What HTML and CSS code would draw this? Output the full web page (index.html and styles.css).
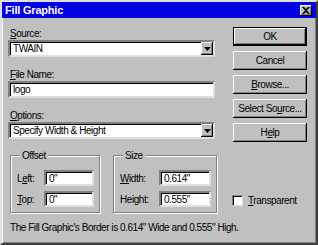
FILE: index.html
```html
<!DOCTYPE html>
<html lang="en">
<head>
  <meta charset="UTF-8" />
  <title>Fill Graphic</title>
  <link rel="stylesheet" href="styles.css">
</head>
<body>
  <div class="window">
    <div class="titlebar">
      <span class="title">Fill Graphic</span>
      <span class="close">
        <svg width="8" height="7" viewBox="0 0 8 7"><path d="M0 0h2l2 2 2-2h2L5 3.5 8 7H6L4 5 2 7H0l3-3.5z" fill="#000"/></svg>
      </span>
    </div>

    <div class="content">
      <div class="fields">
        <div class="label"><u>S</u>ource:</div>
        <div class="combo">
          <span class="value">TWAIN</span>
          <span class="drop"><svg width="7" height="4" viewBox="0 0 7 4"><path d="M0 0h7L3.5 4z" fill="#000"/></svg></span>
        </div>

        <div class="label"><u>F</u>ile Name:</div>
        <div class="textbox"><span class="value">logo</span></div>

        <div class="label"><u>O</u>ptions:</div>
        <div class="combo last">
          <span class="value">Specify Width &amp; Height</span>
          <span class="drop"><svg width="7" height="4" viewBox="0 0 7 4"><path d="M0 0h7L3.5 4z" fill="#000"/></svg></span>
        </div>
      </div>

      <div class="buttons">
        <button class="btn default">OK</button>
        <button class="btn">Cancel</button>
        <button class="btn"><u>B</u>rowse...</button>
        <button class="btn">Select So<u>u</u>rce...</button>
        <button class="btn">H<u>e</u>lp</button>
      </div>
    </div>

    <div class="groups">
      <fieldset class="group offset">
        <legend>Offset</legend>
        <div class="row">
          <span class="rlabel">L<u>e</u>ft:</span>
          <div class="textbox small"><span class="value">0"</span></div>
        </div>
        <div class="row">
          <span class="rlabel"><u>T</u>op:</span>
          <div class="textbox small"><span class="value">0"</span></div>
        </div>
      </fieldset>

      <fieldset class="group size">
        <legend>Size</legend>
        <div class="row">
          <span class="rlabel"><u>W</u>idth:</span>
          <div class="textbox small"><span class="value">0.614"</span></div>
        </div>
        <div class="row">
          <span class="rlabel">Hei<u>g</u>ht:</span>
          <div class="textbox small"><span class="value">0.555"</span></div>
        </div>
      </fieldset>

      <label class="check">
        <span class="box"></span>
        <span><u>T</u>ransparent</span>
      </label>
    </div>

    <div class="status">The Fill Graphic's Border is 0.614" Wide and 0.555" High.</div>
  </div>
</body>
</html>
```

FILE: styles.css
```css
* {
  box-sizing: border-box;
}

body {
  margin: 0;
  font-family: "Liberation Sans", Arial, sans-serif;
  font-size: 10px;
  letter-spacing: -0.45px;
  color: #000;
}

u {
  text-decoration-thickness: 1px;
  text-underline-offset: 1px;
}

.window {
  width: 318px;
  height: 245px;
  background: #c0c0c0;
  border: 2px solid;
  border-color: #dfdfdf #404040 #404040 #dfdfdf;
  box-shadow: inset 1px 1px 0 #fff, inset -1px -1px 0 #808080;
}

.titlebar {
  height: 16px;
  background: #0000e0;
  color: #fff;
  display: flex;
  align-items: center;
  justify-content: space-between;
  padding: 0 4px 0 3px;
}

.title {
  font-weight: bold;
  font-size: 11px;
  letter-spacing: -0.2px;
}

.close {
  width: 12px;
  height: 11px;
  background: #c0c0c0;
  display: flex;
  align-items: center;
  justify-content: center;
  box-shadow: inset -1px -1px 0 #000, inset 1px 1px 0 #fff, inset -2px -2px 0 #808080;
}

.content {
  display: flex;
  padding: 9px 0 0 6px;
}

.fields {
  width: 207px;
}

.label {
  height: 13px;
  line-height: 13px;
  padding-left: 2px;
}

.combo,
.textbox {
  height: 17px;
  background: #fff;
  border: 2px solid;
  border-color: #808080 #dfdfdf #dfdfdf #808080;
  box-shadow: inset 1px 1px 0 #000;
  display: flex;
  align-items: center;
  margin-bottom: 11px;
}

.combo.last {
  margin-bottom: 0;
}

.value {
  padding-left: 3px;
  line-height: 13px;
  white-space: nowrap;
}

.combo .value {
  flex: 1;
}

.drop {
  width: 12px;
  height: 13px;
  background: #c0c0c0;
  display: flex;
  align-items: center;
  justify-content: center;
  box-shadow: inset -1px -1px 0 #000, inset 1px 1px 0 #fff, inset -2px -2px 0 #808080;
}

.buttons {
  margin-left: 18px;
  display: flex;
  flex-direction: column;
  gap: 5px;
}

.btn {
  width: 74px;
  height: 19px;
  padding: 0;
  white-space: nowrap;
  background: #c0c0c0;
  border: none;
  font-family: inherit;
  font-size: 10px;
  letter-spacing: -0.45px;
  color: #000;
  box-shadow: inset -1px -1px 0 #000, inset 1px 1px 0 #fff, inset -2px -2px 0 #808080;
}

.btn.default {
  border: 1px solid #000;
}

.groups {
  display: flex;
  align-items: flex-end;
  margin: 7px 0 0 8px;
}

.group {
  margin: 0;
  padding: 8px 5px 5px 6px;
  border: 1px solid #808080;
  box-shadow: 1px 1px 0 #fff, inset 1px 1px 0 #fff;
  display: flex;
  flex-direction: column;
  gap: 5px;
}

.group legend {
  padding: 0 2px;
  margin-left: 3px;
  height: 13px;
  line-height: 13px;
  background: #c0c0c0;
}

.offset {
  width: 90px;
}

.size {
  width: 104px;
  margin-left: 13px;
}

.row {
  display: flex;
  align-items: center;
  justify-content: space-between;
}

.textbox.small {
  height: 16px;
  width: 50px;
  margin: 0;
}

.size .textbox.small {
  width: 52px;
}

.check {
  display: flex;
  align-items: center;
  gap: 5px;
  margin: 0 0 7px 15px;
}

.check .box {
  width: 11px;
  height: 11px;
  background: #fff;
  border: 1px solid;
  border-color: #808080 #dfdfdf #dfdfdf #808080;
  box-shadow: inset 1px 1px 0 #000;
}

.status {
  margin: 8px 0 0 8px;
  line-height: 13px;
}
```
